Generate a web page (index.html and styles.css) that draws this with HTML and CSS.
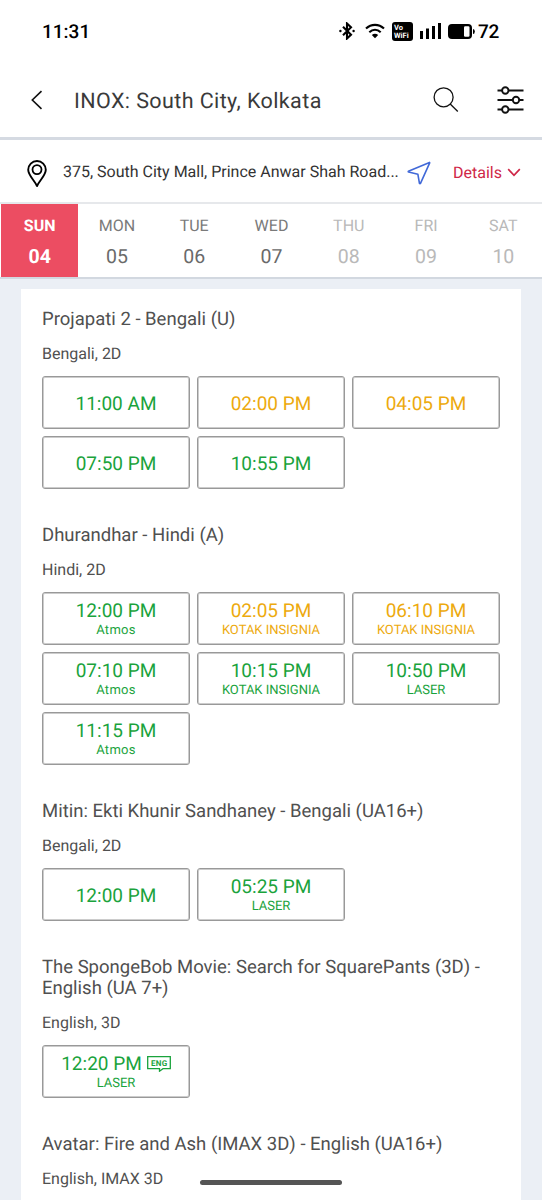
FILE: index.html
```html
<!DOCTYPE html>
<html lang="en">
<head>
    <meta charset="UTF-8">
    <meta name="viewport" content="width=device-width, initial-scale=1">
    <title>INOX: South City, Kolkata</title>
    <link rel="stylesheet" href="styles.css">
</head>
<body>
    <div class="statusbar">
        <span class="clock">11:31</span>
        <div class="status-icons">
            <svg class="bt" width="16" height="18" viewBox="0 0 16 18">
                <path d="M4 4.800l8 8-4 3.700v-15l4 3.700-8 8" fill="none" stroke="#000" stroke-width="2.100"/>
                <circle cx="1.400" cy="9" r="1.200"/>
                <circle cx="14.600" cy="9" r="1.200"/>
            </svg>
            <svg class="wifi" width="20" height="16" viewBox="0 0 20 16">
                <path d="M1 5.600c5.200-5 12.800-5 18 0M4.300 9.300c3.400-3.200 8-3.200 11.400 0" fill="none" stroke="#000" stroke-width="2.100"/>
                <path d="M6.800 11.900q3.200-2.400 6.400 0L10 15.300z"/>
            </svg>
            <span class="vowifi">Vo<br>WiFi</span>
            <svg class="signal" width="21" height="16" viewBox="0 0 21 16">
                <path d="M0 8h3v8H0zM6 5.500h3V16H6zM12 3h3v13h-3zM18 0h3v16h-3z"/>
            </svg>
            <svg class="battery" width="27" height="15" viewBox="0 0 27 15">
                <rect width="24" height="15" rx="4"/>
                <rect x="16" y="2.300" width="5.500" height="10.400" rx="1.200" fill="#fff"/>
                <path d="M25 5q1.800 0 1.800 2.500T25 10z"/>
            </svg>
            <span class="percent">72</span>
        </div>
    </div>

    <div class="header">
        <svg class="back" width="12" height="20" viewBox="0 0 12 20">
            <path d="M10.500 1.200L1.300 10l9.200 8.800" fill="none" stroke="#111" stroke-width="1.600"/>
        </svg>
        <h1>INOX: South City, Kolkata</h1>
        <svg class="search" width="26" height="26" viewBox="0 0 26 26" fill="none" stroke="#111" stroke-width="1.300">
            <circle cx="10.600" cy="10.300" r="9.500"/>
            <path d="M17.200 17l7.600 7.500"/>
        </svg>
        <svg class="filter" width="27" height="28" viewBox="0 0 27 28" fill="#fff" stroke="#111" stroke-width="1.900">
            <path d="M.5 4.500h26M.5 14h26M.5 23.500h26"/>
            <circle cx="8.300" cy="4.500" r="3.200"/>
            <circle cx="19" cy="14" r="3.200"/>
            <circle cx="8.300" cy="23.500" r="3.200"/>
        </svg>
    </div>

    <div class="address">
        <svg class="pin" width="20" height="28" viewBox="0 0 20 28" fill="none" stroke="#000">
            <path d="M10 26C7.500 20.500 1.200 15.300 1.200 9.800a8.800 8.800 0 0 1 17.600 0C18.800 15.300 12.500 20.500 10 26z" stroke-width="1.900" stroke-linejoin="round"/>
            <circle cx="10" cy="9.600" r="4.500" stroke-width="1.800"/>
        </svg>
        <span class="street">375, South City Mall, Prince Anwar Shah Road...</span>
        <svg class="navigate" width="24" height="24" viewBox="0 0 24 24">
            <path d="M22.500 1.400L1.400 10.300q-.4.500.2.700l9.300 2.300 1.500 8.900q.6.900 1.200 0L22.700 1.800z" fill="none" stroke="#4169d8" stroke-width="1.600" stroke-linejoin="round"/>
        </svg>
        <span class="details">Details</span>
        <svg class="chevron" width="14" height="9" viewBox="0 0 14 9">
            <path d="M1.200 1.200L7 7.300l5.800-6.100" fill="none" stroke="#cf2747" stroke-width="1.700"/>
        </svg>
    </div>

    <div class="days">
        <div class="day active"><span>SUN</span><b>04</b></div>
        <div class="day"><span>MON</span><b>05</b></div>
        <div class="day"><span>TUE</span><b>06</b></div>
        <div class="day"><span>WED</span><b>07</b></div>
        <div class="day disabled"><span>THU</span><b>08</b></div>
        <div class="day disabled"><span>FRI</span><b>09</b></div>
        <div class="day disabled"><span>SAT</span><b>10</b></div>
    </div>

    <div class="listing">
        <div class="movie">
            <h2>Projapati 2 - Bengali (U)</h2>
            <p>Bengali, 2D</p>
            <div class="slots">
                <div class="slot">11:00 AM</div>
                <div class="slot filling">02:00 PM</div>
                <div class="slot filling">04:05 PM</div>
                <div class="slot">07:50 PM</div>
                <div class="slot">10:55 PM</div>
            </div>
        </div>

        <div class="movie">
            <h2>Dhurandhar - Hindi (A)</h2>
            <p>Hindi, 2D</p>
            <div class="slots">
                <div class="slot">12:00 PM<small class="mixed">Atmos</small></div>
                <div class="slot filling">02:05 PM<small>KOTAK INSIGNIA</small></div>
                <div class="slot filling">06:10 PM<small>KOTAK INSIGNIA</small></div>
                <div class="slot">07:10 PM<small class="mixed">Atmos</small></div>
                <div class="slot">10:15 PM<small>KOTAK INSIGNIA</small></div>
                <div class="slot">10:50 PM<small>LASER</small></div>
                <div class="slot">11:15 PM<small class="mixed">Atmos</small></div>
            </div>
        </div>

        <div class="movie">
            <h2>Mitin: Ekti Khunir Sandhaney - Bengali (UA16+)</h2>
            <p>Bengali, 2D</p>
            <div class="slots">
                <div class="slot">12:00 PM</div>
                <div class="slot">05:25 PM<small>LASER</small></div>
            </div>
        </div>

        <div class="movie">
            <h2>The SpongeBob Movie: Search for SquarePants (3D) - English (UA 7+)</h2>
            <p>English, 3D</p>
            <div class="slots">
                <div class="slot">
                    <div class="time">12:20 PM
                        <svg class="subtitle" width="24" height="16" viewBox="0 0 24 16">
                            <path d="M.7.700h22.600v12H16l-3.500 2.500v-2.500H.7z" fill="none" stroke="#1aa33c" stroke-width="1.300"/>
                            <text x="12.200" y="9.600" text-anchor="middle">ENG</text>
                        </svg>
                    </div>
                    <small>LASER</small>
                </div>
            </div>
        </div>

        <div class="movie">
            <h2>Avatar: Fire and Ash (IMAX 3D) - English (UA16+)</h2>
            <p>English, IMAX 3D</p>
        </div>
    </div>

    <div class="home-indicator"></div>
</body>
</html>
```

FILE: styles.css
```css
* {
    box-sizing: border-box;
}
body {
    margin: 0;
    height: 1200px;
    overflow: hidden;
    display: flex;
    flex-direction: column;
    background: #ebeff5;
    font-family: Roboto, "Liberation Sans", sans-serif;
    text-rendering: geometricPrecision;
    color: #505050;
}
svg {
    display: block;
    flex: none;
}
h1, h2, p {
    margin: 0;
    font-weight: 400;
}

/* status bar */
.statusbar {
    flex: none;
    height: 62px;
    padding: 0 43px 0 42px;
    display: flex;
    align-items: center;
    justify-content: space-between;
    background: #fff;
    color: #000;
    font-weight: 500;
    font-size: 19px;
}
.status-icons {
    display: flex;
    align-items: center;
}
.wifi {
    margin-left: 10px;
}
.vowifi {
    width: 21px;
    height: 19px;
    margin-left: 7px;
    padding: 2px 0 0 2px;
    border-radius: 3px;
    background: #000;
    color: #fff;
    font-size: 7.5px;
    line-height: 8px;
    font-weight: 700;
}
.signal {
    margin-left: 7px;
}
.battery {
    margin-left: 7px;
}
.percent {
    width: 20px;
    margin-left: 3px;
    margin-right: 1px;
    letter-spacing: -0.3px;
}

/* page header */
.header {
    flex: none;
    height: 78px;
    padding: 0 18px 0 31px;
    display: flex;
    align-items: center;
    background: #fff;
    border-bottom: 3px solid #d5dae2;
}
.header h1 {
    flex: 1;
    margin: 4px 0 0 31px;
    font-size: 21.5px;
    letter-spacing: 0.4px;
    color: #3a3a3a;
}
.filter {
    margin-left: 38px;
}

.address {
    flex: none;
    height: 64px;
    padding: 6px 21px 0 27px;
    display: flex;
    align-items: center;
    background: #fff;
    border-bottom: 2px solid #e6e8eb;
}
.street {
    width: 335px;
    margin: -6px 0 0 16px;
    font-size: 16px;
    white-space: nowrap;
    color: #333;
}
.navigate {
    margin: -3px 0 0 9px;
}
.details {
    margin: -3px 0 0 22px;
    font-size: 16px;
    color: #cf2747;
}
.chevron {
    margin: -4px 0 0 auto;
}

/* date picker */
.days {
    flex: none;
    height: 75px;
    padding-left: 1px;
    display: grid;
    grid-template-columns: repeat(7, 1fr);
    background: #fff;
    border-bottom: 2px solid #d2d8e0;
}
.day {
    display: flex;
    flex-direction: column;
    align-items: center;
    padding-top: 12px;
    font-size: 16px;
    line-height: 20px;
    color: #7a7a7a;
}
.day b {
    margin-top: 9px;
    font-size: 19.5px;
    line-height: 24px;
    font-weight: 400;
    color: #6a6a6a;
}
.day.active {
    background: #ec4d62;
    color: #fff;
    font-weight: 700;
}
.day.active b {
    color: #fff;
    font-weight: 700;
}
.day.disabled,
.day.disabled b {
    color: #b9b9b9;
}

/* showtimes */
.listing {
    flex: 1;
    min-height: 0;
    overflow: hidden;
    margin: 10px 21px 0;
    padding: 20px 21px 0;
    background: #fff;
}
.movie {
    margin-bottom: 36px;
}
.movie h2 {
    font-size: 18.5px;
    line-height: 21px;
}
.movie p {
    margin-top: 14px;
    font-size: 16px;
    line-height: 20px;
}
.slots {
    display: grid;
    grid-template-columns: repeat(3, 148px);
    gap: 7px;
    margin-top: 12px;
}
.slot {
    height: 53px;
    padding-top: 2px;
    display: flex;
    flex-direction: column;
    align-items: center;
    justify-content: center;
    border: 1px solid #999;
    border-radius: 3px;
    box-shadow: inset 0 0 0 1px #ccc;
    font-size: 19px;
    line-height: 20px;
    color: #1aa33c;
}
.slot small {
    padding-top: 1px;
    font-size: 13px;
    line-height: 17px;
}
.slot .mixed {
    letter-spacing: 0.3px;
}
.slot.filling {
    color: #edaa0e;
}
.time {
    display: flex;
    align-items: center;
    gap: 5px;
}
.subtitle text {
    font-size: 8px;
    font-weight: 700;
    fill: #1aa33c;
    letter-spacing: 0.3px;
}

.home-indicator {
    position: absolute;
    left: 200px;
    top: 1180px;
    width: 142px;
    height: 5px;
    border-radius: 3px;
    background: #555;
}
```
